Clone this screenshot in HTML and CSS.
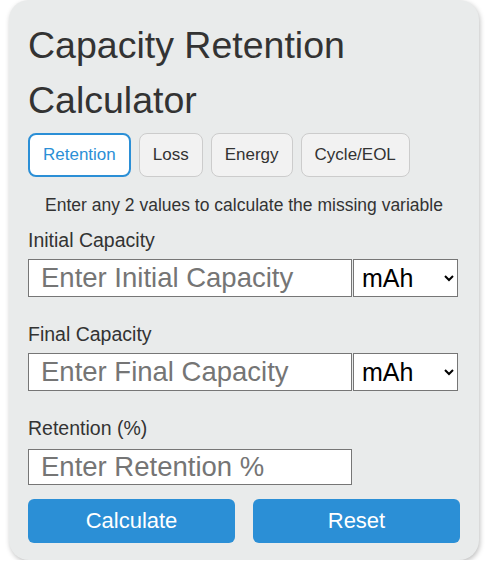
FILE: index.html
```html
<!DOCTYPE html>
<html lang="en">
<head>
  <meta charset="UTF-8">
  <title>Capacity Retention Calculator</title>
  <link rel="stylesheet" href="styles.css">
</head>
<body>

<div class="calc-card">
  <h1>Capacity Retention Calculator</h1>

  <div class="tabs">
    <button class="tab active">Retention</button>
    <button class="tab">Loss</button>
    <button class="tab">Energy</button>
    <button class="tab">Cycle/EOL</button>
  </div>

  <p class="hint">Enter any 2 values to calculate the missing variable</p>

  <label class="field-label first" for="initial">Initial Capacity</label>
  <div class="input-row">
    <input type="number" id="initial" placeholder="Enter Initial Capacity">
    <select id="initialUnit">
      <option>mAh</option>
      <option>Ah</option>
      <option>Wh</option>
    </select>
  </div>

  <label class="field-label" for="final">Final Capacity</label>
  <div class="input-row">
    <input type="number" id="final" placeholder="Enter Final Capacity">
    <select id="finalUnit">
      <option>mAh</option>
      <option>Ah</option>
      <option>Wh</option>
    </select>
  </div>

  <label class="field-label" for="retention">Retention (%)</label>
  <input type="number" id="retention" class="single" placeholder="Enter Retention %">

  <div class="actions">
    <button class="btn" id="calcBtn">Calculate</button>
    <button class="btn" id="resetBtn">Reset</button>
  </div>
</div>

</body>
</html>
```

FILE: styles.css
```css
html, body {
  margin: 0;
  padding: 0;
  background: #fff;
  font-family: "Liberation Sans", Arial, sans-serif;
}

.calc-card {
  box-sizing: border-box;
  width: 470px;
  margin-left: 9px;
  padding: 18px 19px 17px;
  background: #e9ebeb;
  border-radius: 20px;
  box-shadow: 1px 2px 5px rgba(0, 0, 0, 0.25);
}

h1 {
  margin: 0;
  font-size: 37.5px;
  font-weight: normal;
  line-height: 55px;
  color: #333;
}

.tabs {
  display: flex;
  gap: 8px;
  margin-top: 5px;
}

.tab {
  height: 44px;
  padding: 0 13px;
  font-family: inherit;
  font-size: 17px;
  color: #333;
  background: #f2f2f2;
  border: 1px solid #ccc;
  border-radius: 8px;
  cursor: pointer;
}

.tab.active {
  color: #2b8fd6;
  background: #fff;
  border: 2px solid #2b8fd6;
}

.hint {
  margin: 17px 0 0;
  font-size: 17.5px;
  line-height: 22px;
  text-align: center;
  color: #333;
}

.field-label {
  display: block;
  margin-top: 25px;
  font-size: 19.5px;
  line-height: 24px;
  color: #333;
}

.field-label.first {
  margin-top: 12px;
}

.input-row {
  display: flex;
  gap: 1px;
  margin-top: 7px;
  height: 38px;
}

input {
  box-sizing: border-box;
  width: 324px;
  padding: 0 12px;
  font-family: inherit;
  font-size: 27.5px;
  color: #000;
  background: #fff;
  border: 1px solid #767676;
  border-radius: 0;
  outline: none;
}

input::placeholder {
  color: #757575;
}

input.single {
  display: block;
  height: 36px;
  margin-top: 9px;
}

select {
  box-sizing: border-box;
  width: 105px;
  padding: 0 4px;
  font-family: inherit;
  font-size: 25px;
  color: #000;
  background: #fff;
  border: 1px solid #767676;
  border-radius: 0;
}

.actions {
  display: flex;
  gap: 18px;
  margin-top: 14px;
}

.btn {
  width: 207px;
  height: 44px;
  font-family: inherit;
  font-size: 22px;
  color: #fff;
  background: #2b8fd6;
  border: none;
  border-radius: 6px;
  cursor: pointer;
}
```
